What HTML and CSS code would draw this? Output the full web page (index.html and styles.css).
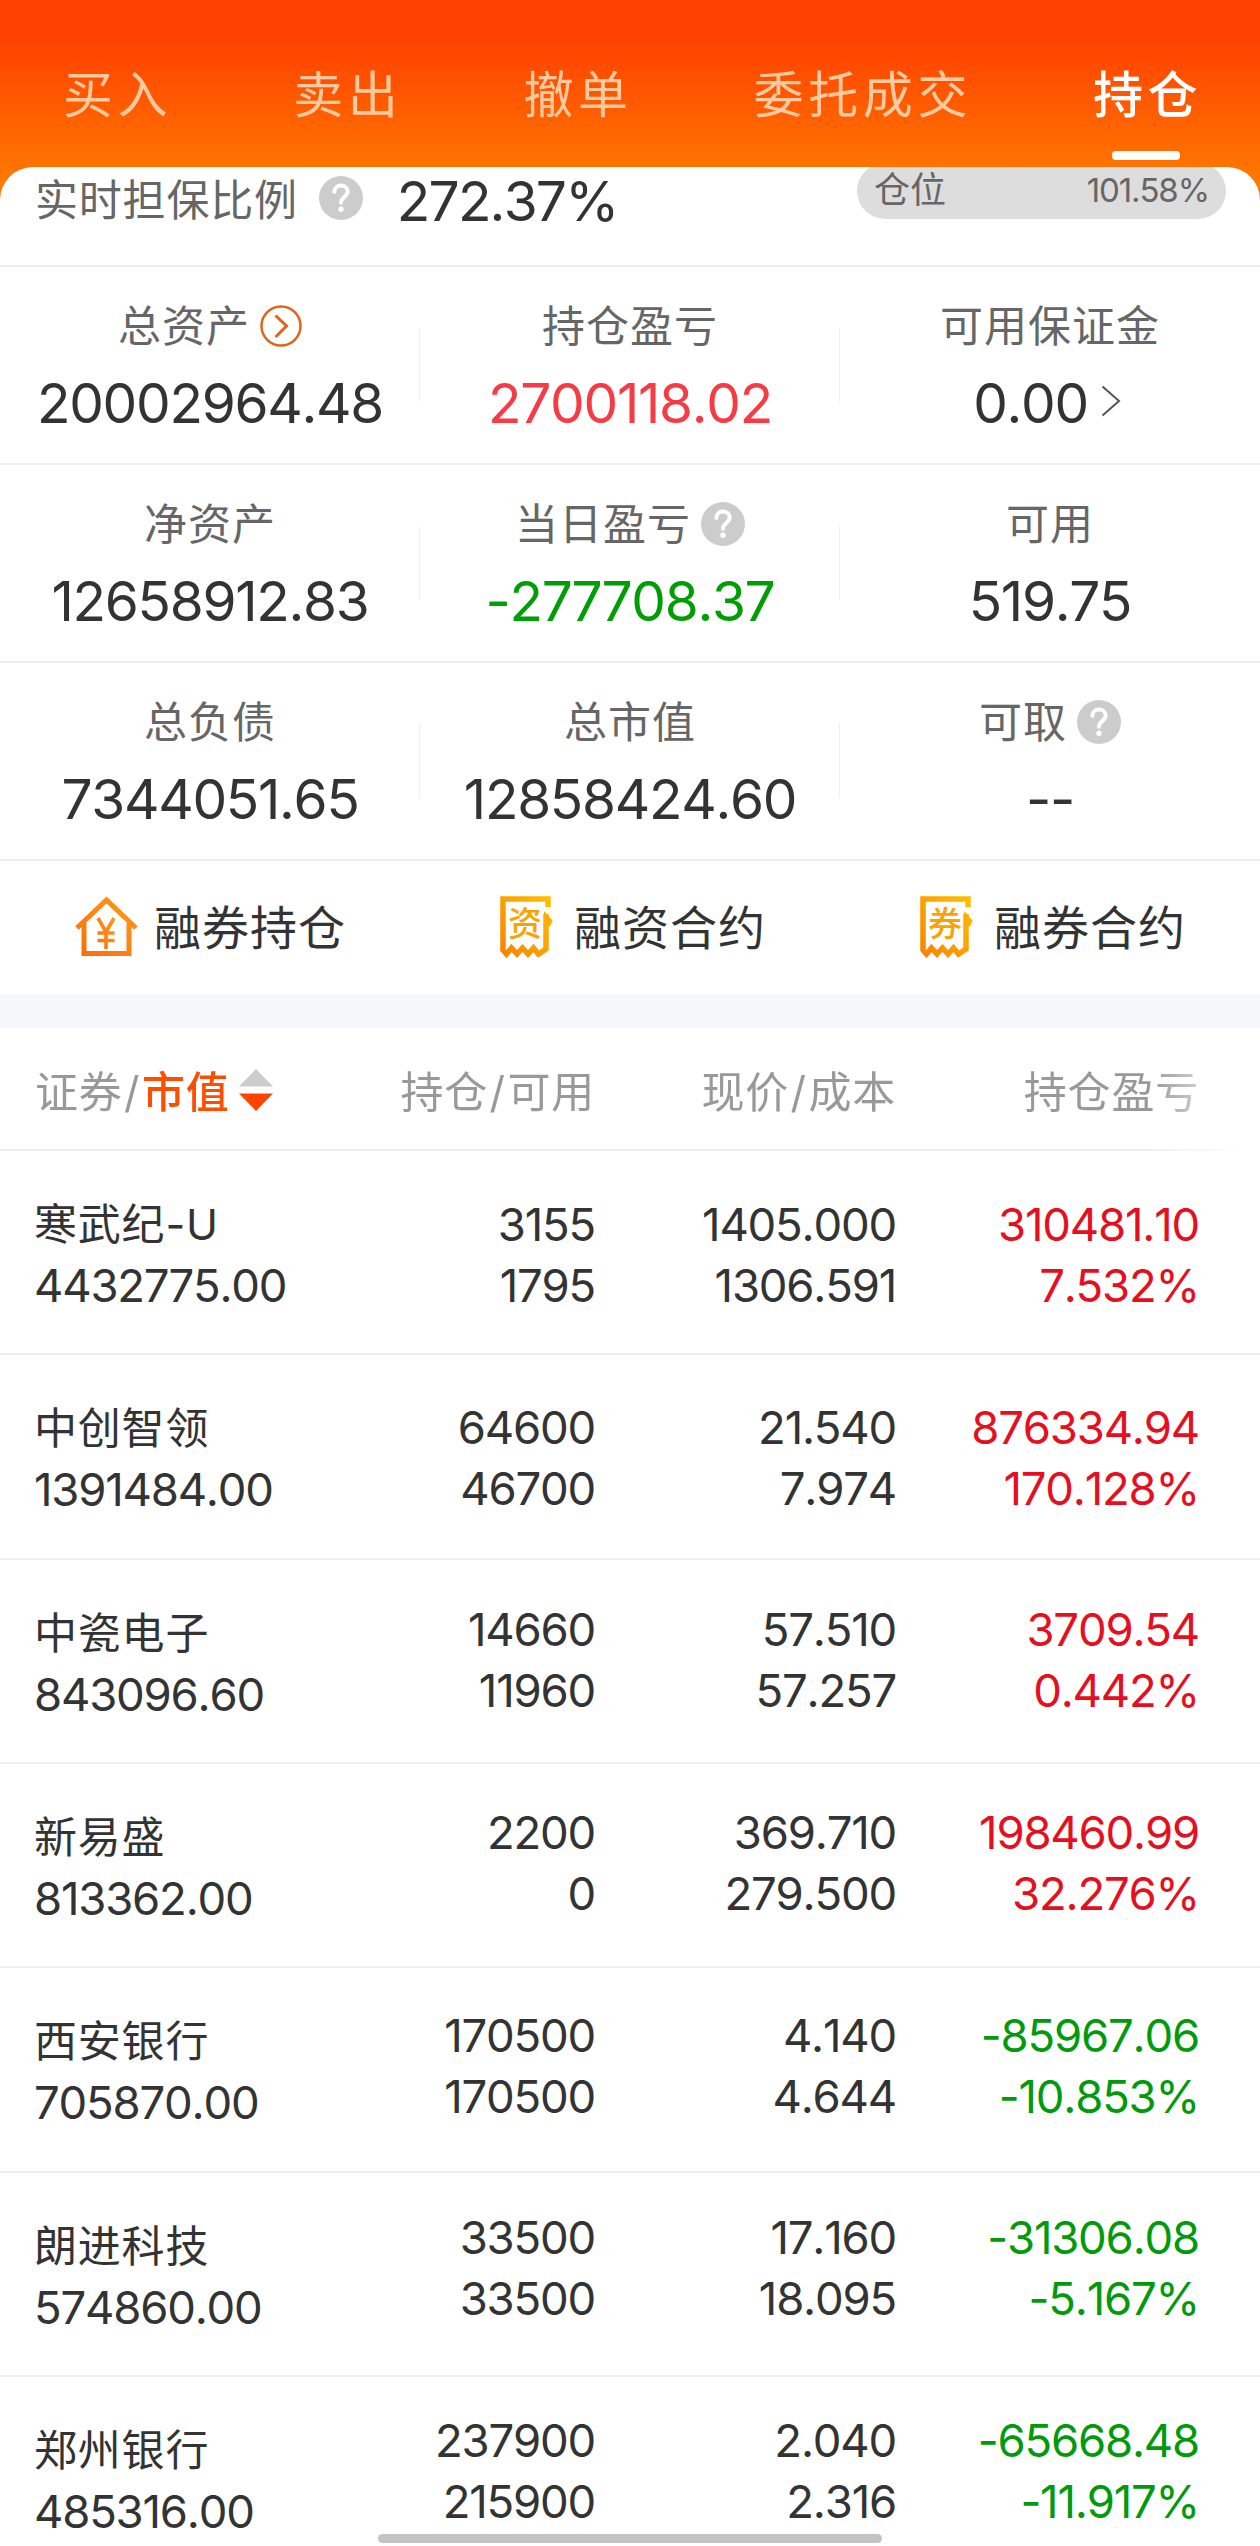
FILE: index.html
```html
<!DOCTYPE html>
<html lang="zh-CN">
<head>
  <meta charset="UTF-8" />
  <meta name="viewport" content="width=device-width, initial-scale=1.0"/>
  <title>持仓</title>
  <link rel="stylesheet" href="styles.css">
</head>
<body>

  <!-- shared icons -->
  <svg class="defs" width="0" height="0">
    <defs>
      <linearGradient id="gold" x1="1" y1="0" x2="0" y2="1">
        <stop offset="0" stop-color="#ffbe00"/>
        <stop offset="1" stop-color="#f98400"/>
      </linearGradient>
      <linearGradient id="flame" x1="1" y1="0" x2="0" y2="1">
        <stop offset="0" stop-color="#ff9a1a"/>
        <stop offset="1" stop-color="#fb6e0a"/>
      </linearGradient>
      <symbol id="help" viewBox="0 0 44 44">
        <circle cx="22" cy="22" r="22" fill="#ccc"/>
        <path d="M15.300 15.800c.3-3.900 3-6.200 6.700-6.200s6.700 2.400 6.700 6c0 5-6.700 5.600-6.700 11.200" fill="none" stroke="#fff" stroke-width="4" stroke-linecap="round"/>
        <circle cx="22" cy="33.200" r="2.700" fill="#fff"/>
      </symbol>
      <symbol id="receipt" viewBox="0 0 64 66">
        <path d="M54 13V5H9v51l3.500 4 5-6 5.500 6 5.500-6 5.500 6 5.500-6 5 6L52 55V20" fill="none" stroke="url(#gold)" stroke-width="5.500"/>
        <path d="M50 17l8.500 9.500-2.500 6h-6z" fill="#ffad00"/>
      </symbol>
    </defs>
  </svg>

  <nav class="tabs">
    <span class="tab">买入</span>
    <span class="tab">卖出</span>
    <span class="tab">撤单</span>
    <span class="tab">委托成交</span>
    <span class="tab active">持仓</span>
  </nav>

  <main class="card">
    <section class="ratio">
      <span class="ratio-label">实时担保比例</span>
      <svg class="help"><use href="#help"/></svg>
      <span class="ratio-value">272.37%</span>
      <div class="position"><span>仓位</span><span class="percent">101.58%</span></div>
    </section>

    <section class="assets">
      <div class="cell">
        <div class="label">总资产
          <svg class="go" viewBox="0 0 42 42" fill="none" stroke="#e0641c" stroke-width="2.500"><circle cx="21" cy="21" r="19.500"/><path d="M15.500 10.500L26.500 21 15.500 32" stroke-width="3"/></svg>
        </div>
        <div class="value">20002964.48</div>
      </div>
      <div class="cell">
        <div class="label">持仓盈亏</div>
        <div class="value rise">2700118.02</div>
      </div>
      <div class="cell">
        <div class="label">可用保证金</div>
        <div class="value">0.00<svg class="chevron" viewBox="0 0 20 32"><path d="M1.500 1.500L18 16 1.500 30.500" fill="none" stroke="#555" stroke-width="2"/></svg></div>
      </div>
      <div class="cell">
        <div class="label">净资产</div>
        <div class="value">12658912.83</div>
      </div>
      <div class="cell">
        <div class="label">当日盈亏 <svg class="help"><use href="#help"/></svg></div>
        <div class="value fall">-277708.37</div>
      </div>
      <div class="cell">
        <div class="label">可用</div>
        <div class="value">519.75</div>
      </div>
      <div class="cell">
        <div class="label">总负债</div>
        <div class="value">7344051.65</div>
      </div>
      <div class="cell">
        <div class="label">总市值</div>
        <div class="value">12858424.60</div>
      </div>
      <div class="cell">
        <div class="label">可取 <svg class="help"><use href="#help"/></svg></div>
        <div class="value">--</div>
      </div>
    </section>

    <section class="links">
      <div class="link">
        <svg class="icon" viewBox="0 0 64 66" fill="none" stroke="url(#flame)">
          <path d="M3 34L32.500 6 62 34M10 29v30.500h45V29" stroke-width="5"/>
          <path d="M24 24l8 14 8-14M32 38v17M23.500 39h17M23.500 46.500h17" stroke-width="3.600"/>
        </svg>
        <span>融券持仓</span>
      </div>
      <div class="link">
        <svg class="icon" viewBox="0 0 64 66"><use href="#receipt"/><text class="mark" x="31" y="42">资</text></svg>
        <span>融资合约</span>
      </div>
      <div class="link">
        <svg class="icon" viewBox="0 0 64 66"><use href="#receipt"/><text class="mark" x="31" y="42">券</text></svg>
        <span>融券合约</span>
      </div>
    </section>

    <section class="list-head">
      <div class="sort">证券<i>/</i><b>市值</b>
        <svg class="arrows" viewBox="0 0 34 42"><path d="M17 0l17 17.500H0z" fill="#ccc"/><path d="M17 42L0 24.500h34z" fill="#ff4400"/></svg>
      </div>
      <div>持仓<i>/</i>可用</div>
      <div>现价<i>/</i>成本</div>
      <div>持仓盈亏</div>
    </section>

    <section class="holdings">
      <div class="names">
        <div class="stock"><span>寒武纪-U</span><span>4432775.00</span></div>
        <div class="stock"><span>中创智领</span><span>1391484.00</span></div>
        <div class="stock"><span>中瓷电子</span><span>843096.60</span></div>
        <div class="stock"><span>新易盛</span><span>813362.00</span></div>
        <div class="stock"><span>西安银行</span><span>705870.00</span></div>
        <div class="stock"><span>朗进科技</span><span>574860.00</span></div>
        <div class="stock"><span>郑州银行</span><span>485316.00</span></div>
      </div>
      <div class="figures">
        <div class="row">
          <div>3155<br>1795</div>
          <div>1405.000<br>1306.591</div>
          <div class="up">310481.10<br>7.532%</div>
        </div>
        <div class="row">
          <div>64600<br>46700</div>
          <div>21.540<br>7.974</div>
          <div class="up">876334.94<br>170.128%</div>
        </div>
        <div class="row">
          <div>14660<br>11960</div>
          <div>57.510<br>57.257</div>
          <div class="up">3709.54<br>0.442%</div>
        </div>
        <div class="row">
          <div>2200<br>0</div>
          <div>369.710<br>279.500</div>
          <div class="up">198460.99<br>32.276%</div>
        </div>
        <div class="row">
          <div>170500<br>170500</div>
          <div>4.140<br>4.644</div>
          <div class="down">-85967.06<br>-10.853%</div>
        </div>
        <div class="row">
          <div>33500<br>33500</div>
          <div>17.160<br>18.095</div>
          <div class="down">-31306.08<br>-5.167%</div>
        </div>
        <div class="row">
          <div>237900<br>215900</div>
          <div>2.040<br>2.316</div>
          <div class="down">-65668.48<br>-11.917%</div>
        </div>
      </div>
    </section>
  </main>

  <div class="home-bar"></div>

</body>
</html>
```
FILE: styles.css
```css
* {
  box-sizing: border-box;
}

body {
  margin: 0;
  width: 1260px;
  height: 2546px;
  overflow: hidden;
  position: relative;
  font-family: Inter, "Noto Sans CJK SC", sans-serif;
  font-kerning: none;
  color: #333;
  background: linear-gradient(#ff4000 35px, #ff7a00 185px);
}

.defs {
  position: absolute;
}

/* top tabs */
.tabs {
  height: 167px;
  padding: 64px 0 0 63px;
  display: flex;
  gap: 121px;
}

.tab {
  font-size: 50px;
  line-height: 62px;
  letter-spacing: 4.6px;
  color: #ffcaa0;
}

.tab.active {
  color: #fff;
  font-weight: 500;
}

.tab.active::after {
  content: "";
  display: block;
  width: 68px;
  height: 9px;
  margin: 25px 0 0 19px;
  border-radius: 4px;
  background: #fff;
}

.card {
  height: 2379px;
  background: #fff;
  border-radius: 33px 33px 0 0;
  overflow: hidden;
}

/* guarantee ratio */
.ratio {
  height: 100px;
  padding: 0 34px 0 35px;
  display: flex;
  align-items: flex-start;
  border-bottom: 2px solid #eee;
}

.ratio-label {
  font-size: 43px;
  line-height: 67px;
  letter-spacing: 0.8px;
  color: #666;
}

.help {
  width: 44px;
  height: 44px;
}

.ratio .help {
  margin: 9px 0 0 21px;
}

.ratio-value {
  margin-left: 34px;
  font-size: 55px;
  line-height: 68px;
  letter-spacing: -1.8px;
}

.position {
  width: 369px;
  height: 56px;
  margin: -4px 0 0 auto;
  padding: 0 17px;
  display: flex;
  justify-content: space-between;
  border-radius: 28px;
  background: #ddd;
  color: #666;
  font-size: 36px;
  line-height: 54px;
}

.percent {
  font-size: 33px;
  letter-spacing: -1.1px;
}

/* assets */
.assets {
  display: grid;
  grid-template-columns: repeat(3, 420px);
  grid-auto-rows: 198px;
}

.cell {
  padding-top: 30px;
  text-align: center;
  border-bottom: 2px solid #eee;
  background: linear-gradient(#eee, #eee) no-repeat right -1px top 61px / 2px 74px;
}

.cell:nth-child(3n) {
  background: none;
}

.label {
  height: 60px;
  display: flex;
  align-items: center;
  justify-content: center;
  gap: 10px;
  font-size: 43px;
  line-height: 58px;
  letter-spacing: 1px;
  padding-bottom: 2px;
  color: #666;
}

.go {
  width: 42px;
  height: 42px;
}

.value {
  font-size: 55px;
  line-height: 92px;
  letter-spacing: -1.3px;
}

.rise {
  color: #f63b45;
}

.fall {
  color: #009e05;
}

.chevron {
  width: 20px;
  height: 32px;
  margin: 0 6px 0 13px;
  vertical-align: 6px;
}

/* shortcuts */
.links {
  height: 167px;
  display: grid;
  grid-template-columns: repeat(3, 420px);
  border-bottom: 34px solid #f6f7fa;
}

.link {
  display: flex;
  align-items: center;
  justify-content: center;
  gap: 16px;
  font-size: 47px;
  line-height: 60px;
  letter-spacing: 1px;
}

.icon {
  width: 64px;
  height: 66px;
  margin-bottom: 2px;
}

.mark {
  font-size: 34px;
  font-weight: 500;
  letter-spacing: 0;
  text-anchor: middle;
  fill: #fba200;
}

/* list header */
.list-head {
  height: 123px;
  padding: 0 61px 0 35px;
  display: grid;
  grid-template-columns: 260px 300px 301px 303px;
  text-align: right;
  border-bottom: 2px solid #eee;
  font-size: 43px;
  line-height: 129px;
  letter-spacing: 0.8px;
  color: #999;
  -webkit-mask-image: linear-gradient(90deg, #000 1150px, transparent 1245px);
  mask-image: linear-gradient(90deg, #000 1150px, transparent 1245px);
}

.list-head i {
  font-style: normal;
  padding: 0 1.5px;
}

.sort {
  display: flex;
  align-items: center;
}

.sort b {
  font-weight: 500;
  color: #ff4e00;
}

.arrows {
  width: 34px;
  height: 42px;
  margin: 0 0 5px 9px;
  flex: none;
}

/* The pinned names and the scrolled figures share one grid area,
   each with its own row height. */
.holdings {
  display: grid;
  font-size: 45.5px;
  line-height: 61px;
  letter-spacing: -1.2px;
}

.names,
.figures {
  grid-area: 1 / 1;
}

.stock {
  height: 204.33px;
  padding: 43px 0 0 34px;
  display: flex;
  flex-direction: column;
  border-bottom: 2px solid #eee;
}

.stock span:first-child {
  font-size: 43px;
  letter-spacing: 0.8px;
}

.row {
  height: 202.67px;
  padding: 43px 61px 0 295px;
  display: grid;
  grid-template-columns: 300px 301px 303px;
  text-align: right;
}

.up {
  color: #e60f20;
}

.down {
  color: #009a0a;
}

.home-bar {
  position: absolute;
  left: 378px;
  bottom: 3px;
  width: 504px;
  height: 9px;
  border-radius: 5px;
  background: #c3c3c3;
}
```
